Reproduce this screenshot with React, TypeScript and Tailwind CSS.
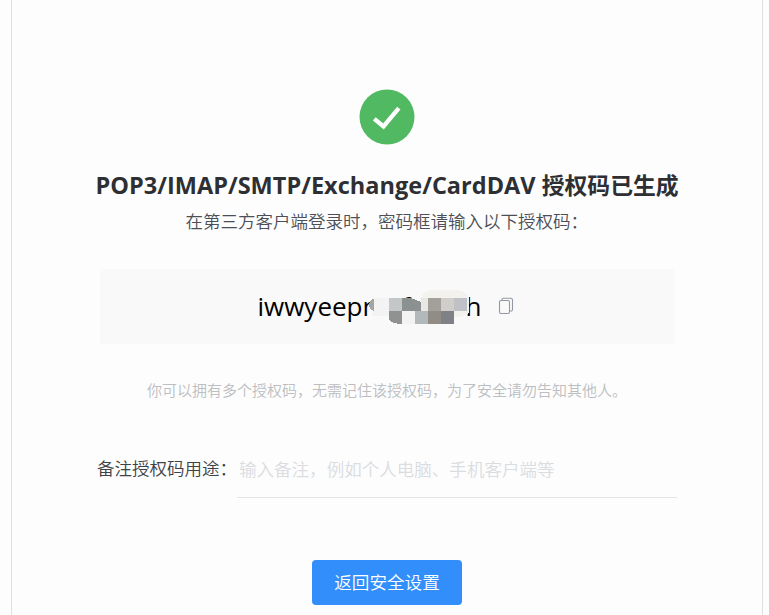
const cjk = "font-['Noto_Sans_CJK_SC',sans-serif]";

function Mosaic() {
  return (
    <svg className="absolute left-[111px] top-[-7px]" width="102" height="36" viewBox="369 289 102 36" shapeRendering="crispEdges">
      <path d="M421 298c1-4 5-8 12-8h24c7 1 12 4 12 9v13c-2 3-7 5-14 5h-20l-14-6z" fill="#f3f2ef" />
      <path d="M376 298c-5 1-7 4-7 7s3 6 7 7z" fill="#a3a5a5" />
      <rect x="374" y="298" width="15" height="18" fill="#f3f3f3" />
      <rect x="389" y="298" width="13" height="13" fill="#c3c7c7" />
      <path d="M402 298h9l10 4v9h-19z" fill="#8b9091" />
      <rect x="421" y="298" width="7" height="13" fill="#e9e8e3" />
      <rect x="428" y="298" width="13" height="13" fill="#a39f9b" />
      <rect x="441" y="298" width="13" height="13" fill="#d0cdcb" />
      <path d="M454 298h13v12l-1 1h-12z" fill="#bfc1c7" />
      <path d="M389 311h13v13c-6 0-11-2-13-4z" fill="#909292" />
      <rect x="402" y="311" width="13" height="13" fill="#f3f3f3" />
      <rect x="415" y="311" width="13" height="13" fill="#b3b8bb" />
      <rect x="428" y="311" width="13" height="13" fill="#918c85" />
      <rect x="441" y="311" width="13" height="13" fill="#7e8287" />
    </svg>
  );
}

export default function App() {
  return (
    <div className={`h-[615px] w-[769px] overflow-hidden bg-[#fdfdfd] pl-[11px] ${cjk}`}>
      <main className="flex h-full w-[752px] flex-col items-center border-x border-[#e0e0e0] pt-[89px]">
        <svg width="56" height="56" viewBox="0 0 56 56">
          <circle cx="28" cy="28" r="27.5" fill="#52b963" />
          <path d="M15.300 29.800l9.200 7.700L39.800 19.200" fill="none" stroke="#fff" strokeWidth="4.300" />
        </svg>
        <h1 className="mt-[24px] flex h-8 items-center whitespace-pre text-[#2d2f33]">
          <span className="font-['Open_Sans',sans-serif] text-[23.5px] font-bold leading-8 tracking-[0.02px]">POP3/IMAP/SMTP/Exchange/CardDAV </span>
          <span className="text-[22.8px] font-bold leading-8">授权码已生成</span>
        </h1>
        <p className="mt-[6px] h-7 w-[403px] whitespace-nowrap text-[17.5px] font-[350] leading-7 text-[#4c4f55]">在第三方客户端登录时，密码框请输入以下授权码：</p>
        <section className="mt-[34px] flex h-[75px] w-[575px] items-center bg-[#f9f9f9] pl-[158px]">
          <div className="relative flex h-[22px] w-[224px] items-center whitespace-nowrap font-['Open_Sans',sans-serif] text-[26px] text-black">
            <span className="w-[145px]">iwwyeepn</span>
            <span className="w-[64px]">f</span>
            <span>h</span>
            <Mosaic />
          </div>
          <svg className="mb-[2px] ml-[16px]" width="16" height="18" viewBox="0 0 16 18" fill="none" stroke="#9299a3" strokeWidth="1.1">
            <rect x="1.5" y="3.5" width="10" height="13" rx="1.5" />
            <path d="M4 3.5V2.5a1.2 1.2 0 0 1 1.2-1.2h7.6A1.7 1.7 0 0 1 14.500 3v9.500a1.500 1.500 0 0 1-1.500 1.500h-1.500" />
          </svg>
        </section>
        <p className="mt-[34px] h-6 w-[480px] whitespace-nowrap text-[15px] font-[350] leading-6 text-[#bcbec1]">你可以拥有多个授权码，无需记住该授权码，为了安全请勿告知其他人。</p>
        <label className="mt-[40px] flex h-[56px] w-[580px] whitespace-nowrap text-[17.5px] leading-[54px]">
          <span className="w-[140px] font-[350] leading-[52px] text-[#3f4247]">备注授权码用途：</span>
          <span className="grow border-b border-[#e3e4e6] pl-[2px] text-[17.55px] font-[350] text-[#dadcdf]">输入备注，例如个人电脑、手机客户端等</span>
        </label>
        <button className="mt-[62px] h-[45px] w-[150px] rounded bg-[#318efb] text-[17.6px] font-[350] text-white">返回安全设置</button>
      </main>
    </div>
  );
}
